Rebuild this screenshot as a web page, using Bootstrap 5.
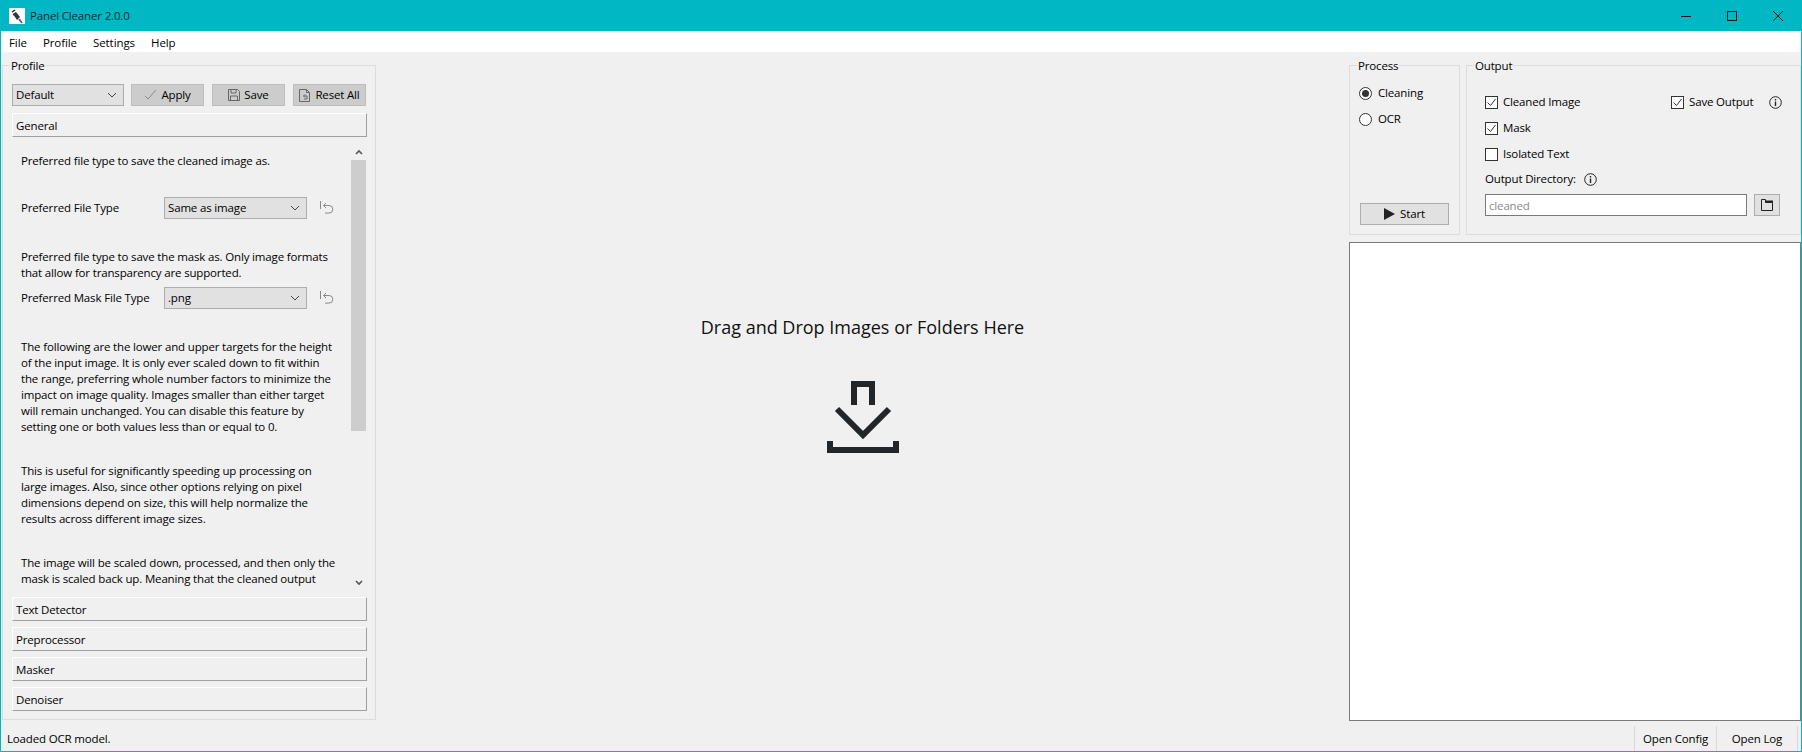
<!DOCTYPE html>
<html lang="en">
<head>
<meta charset="utf-8">
<title>Panel Cleaner 2.0.0</title>
<link rel="stylesheet" href="https://cdn.jsdelivr.net/npm/bootstrap@5.3.0/dist/css/bootstrap.min.css">
<style>
html,body{height:752px;overflow:hidden}
body{background:#f0f0f0;color:#000;font-family:"Open Sans","Noto Sans","Liberation Sans",sans-serif;font-size:11.5px;line-height:16px;letter-spacing:-.16px}
select,input,button{letter-spacing:inherit}
.pc-window{height:752px;width:1802px;border:1px solid #00b7c3;border-top:0;display:flex;flex-direction:column}
.pc-title{height:31px;background:#00b7c3;margin:0 -1px;padding-left:9px;flex:none}
.pc-title .pc-name{margin-left:5px;color:#0a2a30}
.pc-ctrls{margin-right:1px}
.pc-ctrl{width:46px;height:31px}
.pc-menu{height:21px;background:#fff;flex:none;padding-left:8px;gap:16px;line-height:23px;letter-spacing:-.08px}
.pc-main{height:674px;flex:none}
.pc-left{width:375px;flex:none;padding:5px 0 0 1px}
.pc-center{flex:1 1 auto;padding-top:263px;text-align:center}
.pc-right{width:452px;flex:none;padding-top:5px}
fieldset.pc-group{border:1px solid #dcdcdc;margin:0;min-width:0}
fieldset.pc-group>legend{float:none;width:auto;font-size:inherit;line-height:15px;margin:0;padding:1px 1px 0;display:table;height:16px}
fieldset.pc-prof{height:663px;padding:0 9px}
fieldset.pc-prof>legend{margin-left:-2px}
.pc-sel.form-select{font-size:inherit;line-height:16px;border-radius:0;border:1px solid #adadad;background-color:#e1e1e1;color:#000;height:22px;padding:0 20px 0 3px;background-position:right 6px center;background-size:10px 6px;background-image:url("data:image/svg+xml,%3csvg xmlns='http://www.w3.org/2000/svg' viewBox='0 0 10 6'%3e%3cpath fill='none' stroke='%23444' d='M1 1l4 4 4-4'/%3e%3c/svg%3e")}
.pc-sel-profile.form-select{width:112px;flex:none}
.pc-btn.btn{font-size:inherit;line-height:16px;border-radius:0;color:#000;padding:0;height:22px;display:flex;align-items:center;justify-content:center;gap:4px}
.pc-act.btn{width:73px;background:#ccc;border:1px solid #bdbdbd;margin-left:8px}
.pc-act.btn.pc-first{margin-left:7px}
.pc-sec.btn{width:355px;height:24px;justify-content:flex-start;padding:1px 0 0 3px;background:#f0f0f0;border:1px solid;border-color:#fff #a0a0a0 #a0a0a0 #fff;margin-top:6px}
.pc-toolbar{margin-top:11px}
.pc-sec.btn.pc-general{margin-top:7px}
.pc-scroll{height:448px;margin-top:6px}
.pc-text{width:339px;height:448px;padding-left:9px;padding-top:10px;overflow:hidden;flex:none;white-space:nowrap}
.pc-text p{margin:28px 0 0}
.pc-text p.pc-first-p{margin-top:0}
.pc-text p.pc-after-row{margin-top:30px}
.pc-bar{width:15px;flex:none}
.pc-arrow{height:17px}
.pc-thumb{height:271px;background:#cdcdcd}
.pc-row{height:22px}
.pc-row.pc-row-a{margin-top:28px}
.pc-row.pc-row-b{margin-top:6px}
.pc-label{width:143px;flex:none}
.pc-row .pc-sel{width:143px;flex:none}
.pc-undo{margin-left:13px;flex:none}
.pc-drop{font-size:18px;line-height:24px;margin-bottom:42px;color:#111;letter-spacing:0}
fieldset.pc-proc{width:111px;height:178px;padding:0 10px}
fieldset.pc-proc>legend{margin-left:-3px}
fieldset.pc-out{width:335px;height:178px;margin-left:6px;padding:0 0 0 18px}
fieldset.pc-out>legend{margin-left:-11px}
.form-check.pc-radio{height:16px;min-height:0;gap:6px;margin:0 0 0 -1px;padding:0}
.form-check.pc-check{height:16px;min-height:0;gap:5px;margin:0;padding:0}
.form-check.pc-radio-1{margin-top:12px}
.form-check.pc-radio-2{margin-top:10px}
.form-check.pc-c0{width:186px}
.pc-first-checks{margin-top:21px}
.form-check.pc-c1{margin-top:10px}
.pc-dirline{margin-top:9px;height:16px}
.pc-dirinput{margin-top:7px}
.pc-radio .form-check-input,.pc-check .form-check-input{margin:0;float:none;flex:none;width:13px;height:13px;background-color:#fff;border:1px solid #333;box-shadow:none}
.pc-check .form-check-input{border-radius:0}
.pc-check .form-check-input:checked{background-color:#fff;border-color:#333;background-size:11px 11px;background-image:url("data:image/svg+xml,%3csvg xmlns='http://www.w3.org/2000/svg' viewBox='0 0 11 11'%3e%3cpath fill='none' stroke='%23333' d='M1.500 5.500l3 3 5-6.500'/%3e%3c/svg%3e")}
.pc-radio .form-check-input:checked{background-color:#fff;border-color:#333;background-size:7px 7px;background-image:url("data:image/svg+xml,%3csvg xmlns='http://www.w3.org/2000/svg' viewBox='0 0 8 8'%3e%3ccircle cx='4' cy='4' r='4' fill='%23333'/%3e%3c/svg%3e")}
.pc-start.btn{width:89px;height:22px;background:#e1e1e1;border:1px solid #adadad;margin-bottom:9px;gap:5px}
.pc-input.form-control{width:262px;height:22px;flex:none;border-radius:0;border:1px solid #7a7a7a;font-size:inherit;padding:0 3px;background:#fff;box-shadow:none}
.pc-input.form-control::placeholder{color:#8a8a8a;opacity:1}
.pc-folder.btn{width:26px;height:22px;background:#e1e1e1;border:1px solid #adadad;margin-left:7px}
.pc-info{margin-left:11px;flex:none}
.pc-log{height:479px;margin-top:7px;background:#fff;border:1px solid #7a7a7a}
.pc-status{height:25px;flex:none;padding-left:6px}
.pc-cells{margin-right:3px}
.pc-cell{height:25px;width:82px;border-left:1px solid #d9d9d9;text-align:center;line-height:25px}
.pc-cell-last{border-right:1px solid #d9d9d9}
</style>
</head>
<body>
<div class="pc-window">
  <header class="pc-title d-flex align-items-center">
    <svg width="16" height="16" viewBox="0 0 16 16"><rect width="16" height="16" fill="#fff"/><path d="M3 4l3-2M4 7l3-2" stroke="#222" stroke-width="1.400"/><path d="M4 6l3-2 4 5-3 3z" fill="#333"/><path d="M10 11l3 4" stroke="#666" stroke-width="2"/></svg>
    <span class="pc-name">Panel Cleaner 2.0.0</span>
    <div class="ms-auto d-flex pc-ctrls">
      <div class="pc-ctrl d-flex align-items-center justify-content-center"><svg width="10" height="10" viewBox="0 0 10 10"><path d="M0 5.500h10" stroke="#111"/></svg></div>
      <div class="pc-ctrl d-flex align-items-center justify-content-center"><svg width="10" height="10" viewBox="0 0 10 10"><rect x=".5" y=".5" width="9" height="9" fill="none" stroke="#111"/></svg></div>
      <div class="pc-ctrl d-flex align-items-center justify-content-center"><svg width="10" height="10" viewBox="0 0 10 10"><path d="M0 0l10 10M10 0L0 10" stroke="#111"/></svg></div>
    </div>
  </header>
  <nav class="pc-menu d-flex"><span>File</span><span>Profile</span><span>Settings</span><span>Help</span></nav>
  <main class="pc-main d-flex">
    <section class="pc-left">
      <fieldset class="pc-group pc-prof">
        <legend>Profile</legend>
        <div class="d-flex pc-toolbar">
          <select class="form-select pc-sel pc-sel-profile"><option>Default</option></select>
          <button class="btn pc-btn pc-act pc-first" type="button"><svg width="13" height="12" viewBox="0 0 13 12"><path d="M1 7l3 3 8-9" fill="none" stroke="#8a8a8a"/></svg>Apply</button>
          <button class="btn pc-btn pc-act" type="button"><svg width="12" height="12" viewBox="0 0 12 12"><path d="M.5.500h9l2 2v9H.5zM3 .500v3.500h5V.500M2.500 11.500V7h7v4.500" fill="none" stroke="#666"/></svg>Save</button>
          <button class="btn pc-btn pc-act" type="button"><svg width="12" height="13" viewBox="0 0 12 13"><path d="M.5.500h7l3 3v9H.5zM7.500.500v3h3M8 7H4.500l1.500-1.500M4.500 7l1.500 1.500M8 7v3H5" fill="none" stroke="#666"/></svg>Reset All</button>
        </div>
        <button class="btn pc-btn pc-sec pc-general" type="button">General</button>
        <div class="pc-scroll d-flex">
          <div class="pc-text">
            <p class="pc-first-p">Preferred file type to save the cleaned image as.</p>
            <div class="pc-row pc-row-a d-flex align-items-center"><span class="pc-label">Preferred File Type</span><select class="form-select pc-sel"><option>Same as image</option></select>
              <svg class="pc-undo" width="14" height="14" viewBox="0 0 14 14"><path d="M.5 0v8M3.500 4.500H9a3.800 3.800 0 0 1 0 7.600H5M3.500 4.500L6 2M3.500 4.500L6 7" fill="none" stroke="#8a8a8a"/></svg></div>
            <p class="pc-after-row">Preferred file type to save the mask as. Only image formats<br>that allow for transparency are supported.</p>
            <div class="pc-row pc-row-b d-flex align-items-center"><span class="pc-label">Preferred Mask File Type</span><select class="form-select pc-sel"><option>.png</option></select>
              <svg class="pc-undo" width="14" height="14" viewBox="0 0 14 14"><path d="M.5 0v8M3.500 4.500H9a3.800 3.800 0 0 1 0 7.600H5M3.500 4.500L6 2M3.500 4.500L6 7" fill="none" stroke="#8a8a8a"/></svg></div>
            <p class="pc-after-row">The following are the lower and upper targets for the height<br>of the input image. It is only ever scaled down to fit within<br>the range, preferring whole number factors to minimize the<br>impact on image quality. Images smaller than either target<br>will remain unchanged. You can disable this feature by<br>setting one or both values less than or equal to 0.</p>
            <p>This is useful for significantly speeding up processing on<br>large images. Also, since other options relying on pixel<br>dimensions depend on size, this will help normalize the<br>results across different image sizes.</p>
            <p>The image will be scaled down, processed, and then only the<br>mask is scaled back up. Meaning that the cleaned output<br>will still have the original image resolution and size.</p>
          </div>
          <div class="pc-bar d-flex flex-column">
            <div class="pc-arrow d-flex align-items-center justify-content-center"><svg width="8" height="6" viewBox="0 0 8 6"><path d="M1 5l3-3 3 3" fill="none" stroke="#555" stroke-width="1.600"/></svg></div>
            <div class="pc-thumb"></div>
            <div class="pc-arrow d-flex align-items-center justify-content-center mt-auto"><svg width="8" height="6" viewBox="0 0 8 6"><path d="M1 1l3 3 3-3" fill="none" stroke="#555" stroke-width="1.600"/></svg></div>
          </div>
        </div>
        <button class="btn pc-btn pc-sec" type="button">Text Detector</button>
        <button class="btn pc-btn pc-sec" type="button">Preprocessor</button>
        <button class="btn pc-btn pc-sec" type="button">Masker</button>
        <button class="btn pc-btn pc-sec" type="button">Denoiser</button>
      </fieldset>
    </section>
    <section class="pc-center">
      <div class="pc-drop">Drag and Drop Images or Folders Here</div>
      <svg class="d-block mx-auto" width="72" height="72" viewBox="0 0 72 72"><path d="M27 24V3H45V24M10 28L36 54 62 28M3 60V69H69V60" fill="none" stroke="#232629" stroke-width="6"/></svg>
    </section>
    <section class="pc-right">
      <div class="d-flex">
        <fieldset class="pc-group pc-proc d-flex flex-column">
          <legend>Process</legend>
          <div class="form-check pc-radio pc-radio-1 d-flex align-items-center"><input class="form-check-input" type="radio" name="pm" checked><label class="form-check-label">Cleaning</label></div>
          <div class="form-check pc-radio pc-radio-2 d-flex align-items-center"><input class="form-check-input" type="radio" name="pm"><label class="form-check-label">OCR</label></div>
          <button class="btn pc-btn pc-start mt-auto" type="button"><svg width="11" height="12" viewBox="0 0 11 12"><path d="M0 0l11 6L0 12z" fill="#222"/></svg>Start</button>
        </fieldset>
        <fieldset class="pc-group pc-out">
          <legend>Output</legend>
          <div class="d-flex pc-first-checks">
            <div class="form-check pc-check pc-c0 d-flex align-items-center"><input class="form-check-input" type="checkbox" checked><label>Cleaned Image</label></div>
            <div class="form-check pc-check d-flex align-items-center"><input class="form-check-input" type="checkbox" checked><label>Save Output</label>
              <svg class="pc-info" width="13" height="13" viewBox="0 0 13 13"><circle cx="6.500" cy="6.500" r="5.800" fill="none" stroke="#222"/><path d="M6.500 5.500v4.500M6.500 3v1.500" stroke="#222" stroke-width="1.400"/></svg></div>
          </div>
          <div class="form-check pc-check pc-c1 d-flex align-items-center"><input class="form-check-input" type="checkbox" checked><label>Mask</label></div>
          <div class="form-check pc-check pc-c1 d-flex align-items-center"><input class="form-check-input" type="checkbox"><label>Isolated Text</label></div>
          <div class="d-flex align-items-center gap-2 pc-dirline"><span>Output Directory:</span><svg width="13" height="13" viewBox="0 0 13 13"><circle cx="6.500" cy="6.500" r="5.800" fill="none" stroke="#222"/><path d="M6.500 5.500v4.500M6.500 3v1.500" stroke="#222" stroke-width="1.400"/></svg></div>
          <div class="d-flex pc-dirinput"><input class="form-control pc-input" type="text" placeholder="cleaned">
            <button class="btn pc-btn pc-folder" type="button"><svg width="12" height="12" viewBox="0 0 12 12"><path d="M.5 11.500V.5h4v3h7v8z" fill="none" stroke="#222"/><path d="M4 1.500h8v2H4z" fill="#222"/></svg></button></div>
        </fieldset>
      </div>
      <div class="pc-log"></div>
    </section>
  </main>
  <footer class="pc-status d-flex align-items-center"><span>Loaded OCR model.</span>
    <div class="ms-auto d-flex pc-cells"><div class="pc-cell">Open Config</div><div class="pc-cell pc-cell-last">Open Log</div></div>
  </footer>
</div>
<script src="https://cdn.jsdelivr.net/npm/bootstrap@5.3.0/dist/js/bootstrap.bundle.min.js"></script>
</body>
</html>
